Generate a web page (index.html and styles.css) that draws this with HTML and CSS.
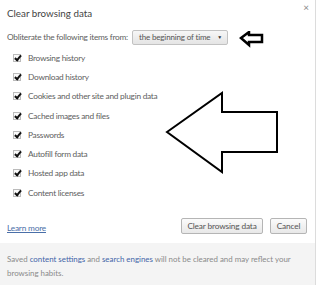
FILE: index.html
```html
<!DOCTYPE html>
<html>
<head>
    <title>Clear browsing data</title>
    <link rel="stylesheet" href="styles.css">
</head>
<body>
    <div class="dialog">
        <div class="header">
            <span class="title">Clear browsing data</span>
            <span class="close">&#215;</span>
        </div>

        <div class="from-row">
            <span>Obliterate the following items from:</span>
            <div class="select">
                <span>the beginning of time</span>
                <span class="caret">&#9660;</span>
            </div>
        </div>

        <ul class="items">
            <li><span class="box"></span>Browsing history</li>
            <li><span class="box"></span>Download history</li>
            <li><span class="box"></span>Cookies and other site and plugin data</li>
            <li><span class="box"></span>Cached images and files</li>
            <li><span class="box"></span>Passwords</li>
            <li><span class="box"></span>Autofill form data</li>
            <li><span class="box"></span>Hosted app data</li>
            <li><span class="box"></span>Content licenses</li>
        </ul>

        <div class="actions">
            <a class="learn" href="#">Learn more</a>
            <div class="buttons">
                <button class="btn btn-clear">Clear browsing data</button>
                <button class="btn">Cancel</button>
            </div>
        </div>

        <div class="footer">
            Saved <a href="#">content settings</a> and <a href="#">search engines</a> will not be cleared and may reflect your<br>
            browsing habits.
        </div>

        <!-- hand-drawn annotation arrows on top of the screenshot -->
        <svg class="arrow-small" width="30" height="20" viewBox="0 0 30 20">
            <polygon points="2,7 10,1 10,4 23,4 23,11 10,11 10,14" fill="#fff" stroke="#000" stroke-width="2.5"/>
        </svg>
        <svg class="arrow-big" width="116" height="85" viewBox="0 0 116 85">
            <polygon points="3,42 58,3 58,22 113,22 113,62 58,62 58,82" fill="#fff" stroke="#000" stroke-width="2"/>
        </svg>
    </div>
</body>
</html>
```

FILE: styles.css
```css
body {
    margin: 0;
    background-color: #fff;
    font-family: Lato, "Open Sans", Arial, sans-serif;
    color: #606060;
}

.dialog {
    position: relative;
    width: 315px;
    height: 285px;
    border-right: 1px solid #dcdcdc;
    display: flex;
    flex-direction: column;
}

.header {
    display: flex;
    justify-content: space-between;
    align-items: center;
    height: 26px;
    padding: 0 6px 0 7px;
}

.title {
    font-size: 9.8px;
    color: #444;
}

.close {
    align-self: flex-start;
    margin-top: 1px;
    font-size: 10px;
    color: #888;
}

.from-row {
    display: flex;
    align-items: center;
    gap: 4px;
    height: 22px;
    padding-left: 7px;
    font-size: 8.3px;
    letter-spacing: -0.25px;
}

.select {
    width: 96px;
    height: 15px;
    box-sizing: border-box;
    display: flex;
    align-items: center;
    justify-content: space-between;
    padding: 0 5px 0 6px;
    border: 1px solid #c2c2c2;
    border-radius: 2px;
    background: linear-gradient(#f7f7f7, #e4e4e4);
    font-size: 8px;
    letter-spacing: -0.15px;
    color: #555;
}

.caret {
    font-size: 5px;
    color: #333;
}

.items {
    list-style: none;
    margin: 0;
    padding: 0 0 0 13px;
    font-size: 8.3px;
    letter-spacing: -0.25px;
}

.items li {
    display: flex;
    align-items: center;
    height: 19.3px;
}

.box {
    position: relative;
    width: 6px;
    height: 6px;
    margin-right: 7px;
    border: 1px solid #bbb;
    background: #fafafa;
}

.box::after {
    content: "";
    position: absolute;
    left: 1.5px;
    top: -1px;
    width: 2px;
    height: 5px;
    border: solid #111;
    border-width: 0 2px 2px 0;
    transform: rotate(40deg);
}

.actions {
    display: flex;
    justify-content: space-between;
    align-items: center;
    height: 16px;
    margin-top: 15.6px;
    padding: 0 8px 0 7px;
}

.learn {
    margin-top: 4px;
    font-size: 8.3px;
    letter-spacing: -0.2px;
    color: #4a6fa8;
}

.buttons {
    display: flex;
    gap: 7px;
}

.btn {
    height: 16px;
    padding: 0;
    border: 1px solid #b5b5b5;
    border-radius: 2px;
    background: linear-gradient(#fbfbfb, #e8e8e8);
    font-family: Lato, "Open Sans", Arial, sans-serif;
    font-size: 8.3px;
    letter-spacing: -0.15px;
    color: #555;
    width: 37px;
}

.btn-clear {
    width: 82px;
}

.footer {
    margin-top: 9px;
    flex: 1;
    background-color: #f4f4f4;
    padding: 9px 4px 0 7px;
    font-size: 7.9px;
    line-height: 14px;
    color: #8a8a8a;
}

.footer a {
    color: #3f64a8;
    text-decoration: none;
}

.arrow-small {
    position: absolute;
    left: 239px;
    top: 31px;
}

.arrow-big {
    position: absolute;
    left: 164px;
    top: 90px;
}
```
